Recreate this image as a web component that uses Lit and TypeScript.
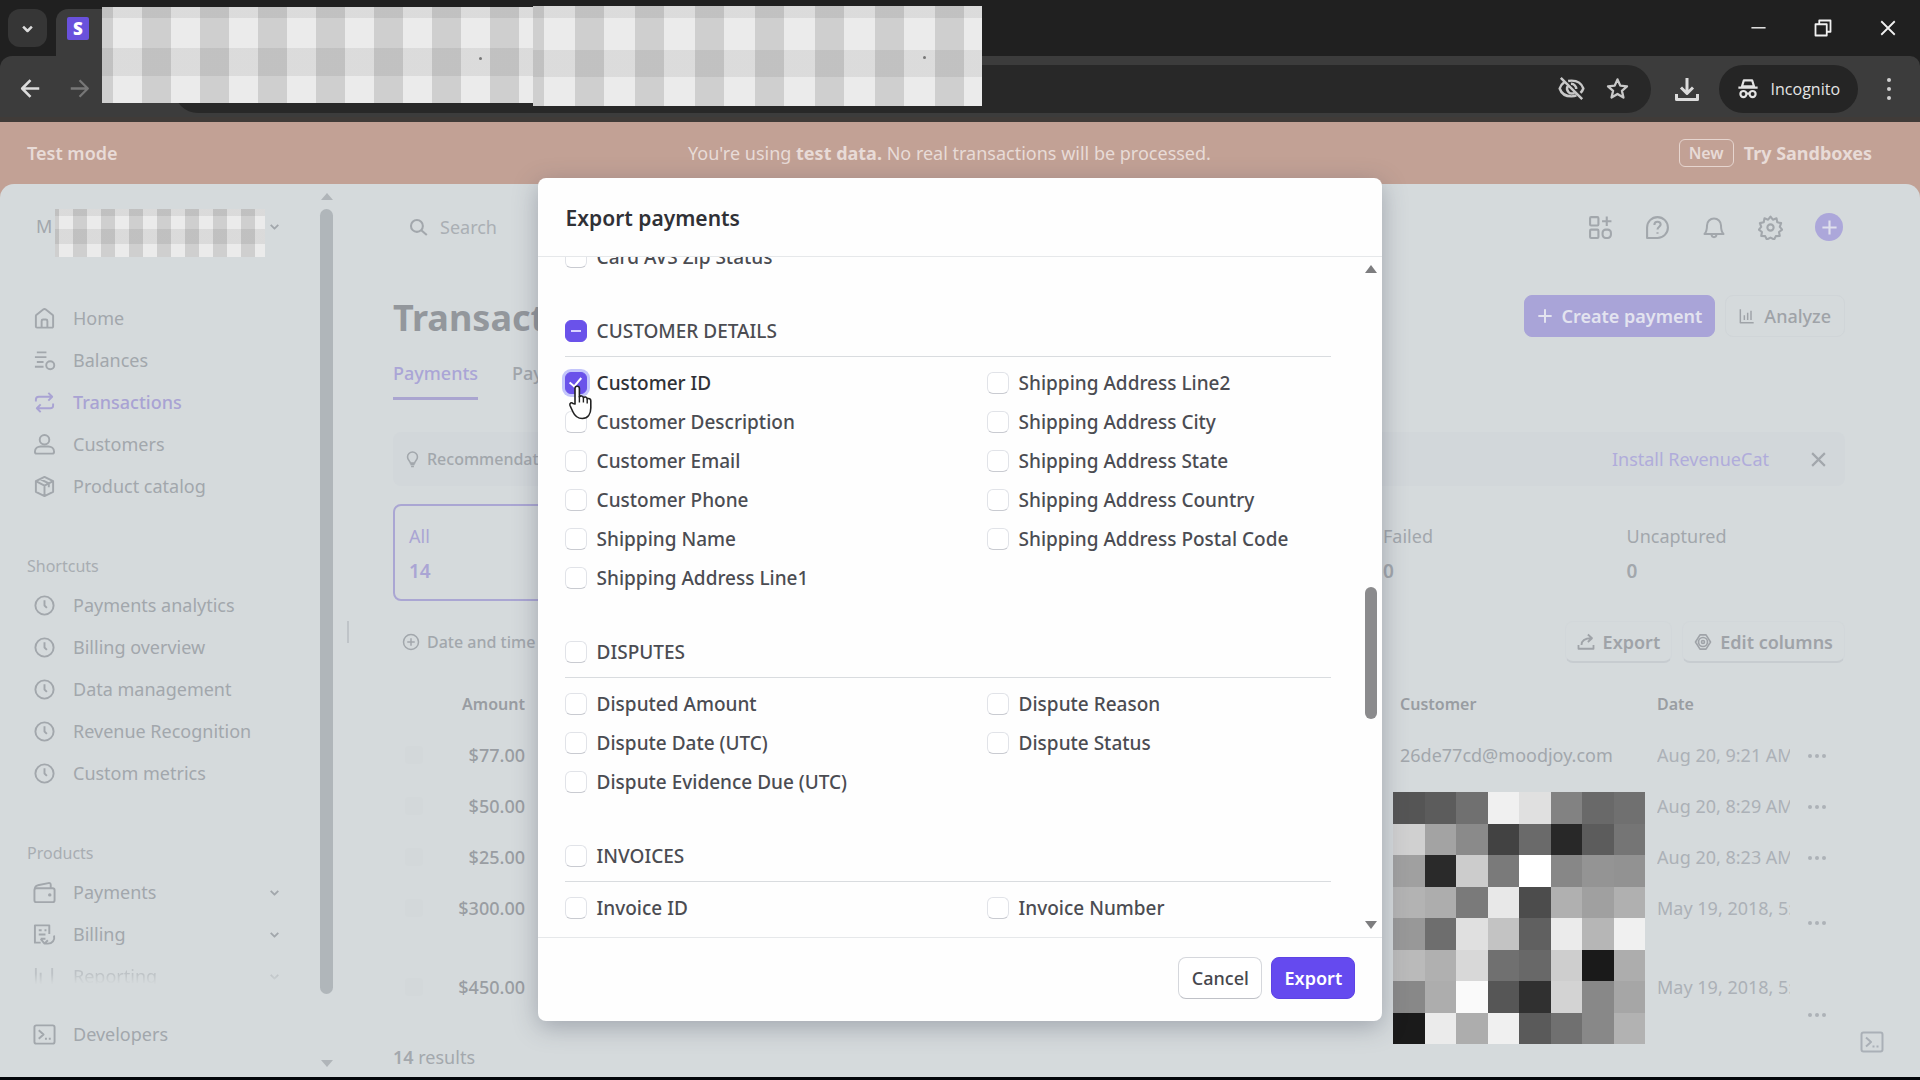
import { LitElement, html, svg, css, nothing } from "lit";
import { customElement, state } from "lit/decorators.js";
import { classMap } from "lit/directives/class-map.js";
import { styleMap } from "lit/directives/style-map.js";

const paths: Record<string, unknown> = {
  home: svg`<path d="M3 9.5v10.8a1.2 1.2 0 0 0 1.2 1.2h15.6a1.2 1.2 0 0 0 1.2-1.2V9.5c0-.6-.3-1.200-.8-1.500L13.400 2.600a2.300 2.300 0 0 0-2.800 0L3.800 8c-.5.300-.8.900-.8 1.500z"/><path d="M9 21v-6.500a1.500 1.500 0 0 1 1.500-1.500h3a1.500 1.500 0 0 1 1.500 1.500V21"/>`,
  balances: svg`<path d="M4 3.500h10M2 8.500h12M4 13.500h7M2 18.500h9"/><circle cx="18" cy="17" r="4.200"/>`,
  swap: svg`<path d="M3 11V9a3 3 0 0 1 3-3h14M16 2l4 4-4 4M21 13v2a3 3 0 0 1-3 3H4M8 14l-4 4 4 4"/>`,
  person: svg`<circle cx="12" cy="7" r="5"/><path d="M2 19.500c0-3.500 3-5.500 6-5.500h8c3 0 6 2 6 5.500 0 1-.8 2-2 2H4c-1.200 0-2-1-2-2z"/>`,
  box: svg`<path d="M12 2l9 4.500v11L12 22l-9-4.500v-11zM3 6.500l9 4.500 9-4.500M12 11v11M7.500 4.300l9 4.500v4"/>`,
  clock: svg`<circle cx="12" cy="12" r="9.500"/><path d="M12 6.500V12l2.500 2.500"/>`,
  wallet: svg`<rect x="1.500" y="7.500" width="21" height="14.500" rx="2"/><path d="M2 8c0-2 1-3 3-3.500L16 2.200c1.500-.3 2.500.3 2.500 2V7.500"/><circle cx="17.500" cy="14.500" r=".8" fill="currentColor"/>`,
  billing: svg`<path d="M8 20.500H2V2.500h15v9M6 7.500h3M6 12h7M12 7.500h2"/><path d="M8 16.500h5M8 16.500l4 5M22 13c1 5-2 8.500-6.500 8.500H12l3.500-3.500"/>`,
  report: svg`<path d="M3 20V3M20 20V3M8 20V8"/>`,
  terminal: svg`<rect x="1.500" y="2.500" width="21" height="19" rx="2"/><path d="M6 7.500l5 4.500-5 4.500M12.500 16.500h2M16.500 16.500h2"/>`,
  search: svg`<circle cx="10" cy="10" r="7.500"/><path d="M15.500 15.500l7 6"/>`,
  chev: svg`<path d="M5 9l7 7 7-7"/>`,
  apps: svg`<rect x="2" y="2" width="8" height="8" rx="1"/><rect x="2" y="14" width="8" height="8" rx="1"/><rect x="14" y="14" width="8" height="8" rx="3"/><path d="M18 1.500v9M13.500 6h9"/>`,
  help: svg`<path d="M2 22v-10a10 10 0 1 1 10 10z"/><path d="M9 9.500c0-4 6-4 6-.3 0 2-3 2.300-3 4.800M12 16.500v1.500"/>`,
  bell: svg`<path d="M2.500 19c2-2 2.500-4 2.500-8.500a7 7 0 0 1 14 0c0 4.500.5 6.500 2.500 8.500zM9.500 19.500c.3 3.500 4.700 3.500 5 0"/>`,
  gear: svg`<circle cx="12" cy="12" r="3"/><path d="M12 1.500l2.300 3 3.500-1.300.7 3.800 3.700.8-1.300 3.600 2.300 2.600-3 2.300.7 3.800-3.800.2-1.600 3.200-3.500-1.800-3.500 1.800-1.600-3.200-3.800-.2.700-3.800-3-2.300 2.300-2.600L1.800 7.800l3.700-.8.700-3.800 3.500 1.300z"/>`,
  hexgear: svg`<path d="M8 2.500h8l6 9.500-6 9.500H8L2 12z"/><circle cx="12" cy="12" r="6"/><circle cx="12" cy="12" r="2"/>`,
  plus: svg`<path d="M12 2v20M2 12h20"/>`,
  chart: svg`<path d="M2 2v20h20M8 18v-7M13 18V7M18 18V4"/>`,
  bulb: svg`<path d="M9 19h6M10 22h4M9 17c-.5-3-4-4-4-8.500a7 7 0 0 1 14 0c0 4.500-3.500 5.500-4 8.500z"/>`,
  addcircle: svg`<circle cx="12" cy="12" r="10"/><path d="M12 7v10M7 12h10"/>`,
  share: svg`<path d="M2 16v5h20v-5M6 16c0-6 4-9 13-9M14.500 2L20 7l-5.500 5"/>`,
  close: svg`<path d="M3 3l18 18M21 3L3 21"/>`,
  back: svg`<path d="M22 12H3M12 2.500L2.500 12l9.500 9.500"/>`,
  forward: svg`<path d="M2 12h19M12 2.500l9.500 9.500-9.500 9.500"/>`,
  min: svg`<path d="M2 11h20"/>`,
  restore: svg`<rect x="2" y="7" width="15" height="15"/><path d="M7 7V2h15v15h-5"/>`,
  eyeoff: svg`<path d="M5.500 6.500C3.500 8 2 10 1.500 12 3 16.500 7 19 12 19c1.500 0 3-.2 4.300-.8M9 5.300c1-.2 2-.3 3-.3 5 0 9 2.500 10.500 7-.5 1.500-1.400 2.800-2.500 3.900M8.500 10a4.500 4.500 0 0 0 6 6M11.500 7.800a4.500 4.500 0 0 1 4.700 4.700M2.500 2.500l19 19"/>`,
  star: svg`<path d="M12 2.500l2.900 6.500 7 .7-5.300 4.700 1.600 7L12 17.700l-6.200 3.700 1.600-7L2.100 9.700l7-.7z"/>`,
  download: svg`<path d="M12 1v15M6 10.500l6 6 6-6M1.500 17v5.500h21V17"/>`,
  incognito: svg`<path d="M7.500 2.500h9l2 6.500h-13zM1.500 10.500h21" /><circle cx="7" cy="17.500" r="3.300"/><circle cx="17" cy="17.500" r="3.300"/><path d="M10.300 17h3.400"/>`,
};

const icon = (name: string, size = 22, stroke = 2) => html`<svg
  class="icon" width=${size} height=${size} viewBox="0 0 24 24" fill="none"
  stroke="currentColor" stroke-width=${stroke} stroke-linejoin="round" aria-hidden="true"
>${paths[name]}</svg>`;

interface Section { title?: string; left: string[]; right: string[]; }

const sections: Section[] = [
  { left: ["Card AVS Zip Status"], right: [] },
  {
    title: "CUSTOMER DETAILS",
    left: ["Customer ID", "Customer Description", "Customer Email", "Customer Phone", "Shipping Name", "Shipping Address Line1"],
    right: ["Shipping Address Line2", "Shipping Address City", "Shipping Address State", "Shipping Address Country", "Shipping Address Postal Code"],
  },
  {
    title: "DISPUTES",
    left: ["Disputed Amount", "Dispute Date (UTC)", "Dispute Evidence Due (UTC)"],
    right: ["Dispute Reason", "Dispute Status"],
  },
  { title: "INVOICES", left: ["Invoice ID"], right: ["Invoice Number"] },
];

const mosaic = [
  "55 5c 70 f0 e0 82 69 70", "d0 a3 8a 42 6a 28 5c 75", "a0 2a cc 7a ff 87 94 92", "b3 ad 7a e8 4c b0 a0 b0",
  "98 6e e0 c3 60 eb b6 f0", "ba b0 d8 70 68 ce 1a ad", "88 ad fa 56 30 d3 88 a6", "1a eb ad f0 5a 70 88 b2",
].flatMap((row) => row.split(" "));

@customElement("export-dialog")
class ExportDialog extends LitElement {
  @state() private chosen = new Set<string>(["Customer ID"]);

  static styles = css`
    :host {
      display: flex; flex-direction: column; width: 44%; height: calc(100% - 112px);
      background: #fefefe; border-radius: 8px; color: #4b4c52;
      box-shadow: 0 6px 24px rgba(60, 66, 87, 0.35);
      font: 500 19px/24px "Noto Sans", "Open Sans", sans-serif;
    }
    header { box-sizing: border-box; height: 79px; padding: 2px 28px 0; display: flex; align-items: center; border-bottom: 1px solid #e6e8ea; }
    h2 { margin: 0; font-size: 21px; font-weight: 600; color: #303136; }
    .body { flex: 1; min-height: 0; display: flex; }
    .content { flex: 1; overflow: hidden; padding: 0 29px 0 27px; }
    .sections { margin-top: -20px; }
    .section { margin-bottom: 30px; }
    .head { height: 50px; display: flex; align-items: center; border-bottom: 1px solid #d9dcdf; margin-bottom: 6px; }
    .cols { display: grid; grid-template-columns: 422px 1fr; }
    .row { height: 39px; display: flex; align-items: center; }
    label { padding-left: 10px; white-space: nowrap; }
    .on + label { color: #303136; }
    input {
      appearance: none; box-sizing: border-box; width: 22px; height: 22px; margin: 0; flex: none;
      border: 1px solid #e1e3e8; border-bottom-color: #c9cbd1; border-radius: 6px; background: #fff;
      display: grid; place-items: center;
    }
    input.on, input.some { background: #6a52ea; border-color: #6a52ea; }
    input.on { box-shadow: 0 0 0 3px #c3c5fb; }
    input.some::after { content: ""; width: 10px; height: 2px; background: #d9d3ff; }
    input.on::after { content: ""; width: 5px; height: 10px; margin-bottom: 4px; border: solid #fff; border-width: 0 2px 2px 0; transform: rotate(40deg); }
    .bar { width: 22px; display: flex; flex-direction: column; align-items: center; padding: 8px 0; box-sizing: border-box; }
    .up, .down { border: 6px solid transparent; }
    .up { border-top: 0; border-bottom: 8px solid #7d7d7f; }
    .down { border-bottom: 0; border-top: 8px solid #7d7d7f; }
    .track { flex: 1; align-self: stretch; display: grid; grid-template-rows: 314fr 132fr 202fr; justify-items: center; }
    .thumb { grid-row: 2; width: 12px; border-radius: 6px; background: #8b8b8d; }
    footer { box-sizing: border-box; height: 84px; border-top: 1px solid #e6e8ea; padding: 0 27px 3px; display: flex; align-items: center; justify-content: flex-end; gap: 9px; }
    button {
      box-sizing: border-box; height: 42px; width: 84px; padding: 0; border-radius: 8px; border: 1px solid #d5d7dc;
      border-bottom-color: #bfc1c7; background: #fff; color: #46474d; font: inherit; font-size: 18px;
    }
    button.primary { background: #654aef; border-color: #5d43e4; color: #fff; font-weight: 600; }
  `;

  private toggle(name: string) {
    const next = new Set(this.chosen);
    next.has(name) ? next.delete(name) : next.add(name);
    this.chosen = next;
  }

  private field(name: string) {
    const id = name.toLowerCase().replace(/\W+/g, "-");
    const on = this.chosen.has(name);
    return html`<div class="row"><input type="checkbox" id=${id} class=${classMap({ on })} .checked=${on} @change=${() => this.toggle(name)}><label for=${id}>${name}</label></div>`;
  }

  private section(s: Section) {
    const some = [...s.left, ...s.right].some((n) => this.chosen.has(n));
    return html`<section class="section">
      ${s.title ? html`<div class="head"><input type="checkbox" id=${s.title.replace(" ", "-")} class=${classMap({ some })} .indeterminate=${some}><label for=${s.title.replace(" ", "-")}>${s.title}</label></div>` : nothing}
      <div class="cols"><div>${s.left.map((n) => this.field(n))}</div><div>${s.right.map((n) => this.field(n))}</div></div>
    </section>`;
  }

  render() {
    return html`
      <header><h2>Export payments</h2></header>
      <div class="body">
        <div class="content"><div class="sections">${sections.map((s) => this.section(s))}</div></div>
        <div class="bar"><i class="up"></i><div class="track"><i class="thumb"></i></div><i class="down"></i></div>
      </div>
      <footer><button>Cancel</button><button class="primary">Export</button></footer>`;
  }
}

@customElement("browser-chrome")
class BrowserChrome extends LitElement {
  static styles = css`
    :host { display: block; position: relative; height: 122px; background: #202020; color: #dcdcdc; font: 400 16px/24px "Open Sans", "Noto Sans", sans-serif; }
    button { background: none; border: 0; padding: 0; color: inherit; font: inherit; display: flex; align-items: center; justify-content: center; }
    .icon { display: block; }
    .tabs { height: 56px; display: flex; align-items: center; padding: 0 21px 0 8px; }
    .search { width: 39px; height: 38px; border-radius: 12px; background: #363636; }
    .tab { align-self: flex-end; margin-left: 9px; height: 47px; width: 60px; border-radius: 12px 12px 0 0; background: #3c3c3c; display: flex; align-items: center; padding-left: 11px; }
    .fav { width: 22px; height: 23px; border-radius: 2px; background: #6951dc; color: #fff; font-weight: 800; font-size: 17px; line-height: 23px; text-align: center; margin-bottom: 9px; }
    .win { margin-left: auto; display: flex; gap: 47px; padding-right: 2px; color: #f0f0f0; }
    .bar { height: 66px; background: #3c3c3c; display: flex; align-items: center; padding: 4px 20px 0 20px; border-radius: 12px 10px 0 0; box-sizing: border-box; border-bottom: 5px solid #403b38; }
    .fwd { color: #777; margin-left: 28px; }
    .url { flex: 1; height: 48px; margin-left: 84px; border-radius: 24px; background: #282828; display: flex; align-items: center; justify-content: flex-end; gap: 21px; padding-right: 22px; color: #c8c8c8; }
    .dl { margin: 0 20px 0 24px; }
    .incog { height: 48px; padding: 0 18px; border-radius: 24px; background: #252525; display: flex; align-items: center; gap: 12px; margin-right: 20px; color: #e4e4e4; }
    .more { display: grid; gap: 5px; width: 22px; justify-items: center; }
    .more i { width: 4px; height: 4px; border-radius: 2px; background: #d0d0d0; }
    .mask { position: absolute; }
    .m1 { left: 102px; top: 7px; width: 432px; height: 96px;
      background: linear-gradient(rgba(0,0,0,.065) 11px, transparent 11px 41px, rgba(0,0,0,.065) 41px 69px, transparent 69px),
        repeating-linear-gradient(90deg, #cfcfcf 0 29px, #ebebeb 29px 58px) -18px 0 / 464px 100%; }
    .m2 { left: 533px; top: 6px; width: 449px; height: 100px;
      background: linear-gradient(rgba(0,0,0,.065) 12px, transparent 12px 44px, rgba(0,0,0,.065) 44px 71px, transparent 71px),
        repeating-linear-gradient(90deg, #cfcfcf 0 29px, #ebebeb 29px 60px) -18px 0 / 480px 100%; }
    .speck { position: absolute; right: 52px; top: 50px; width: 3px; height: 3px; border-radius: 2px; background: #777; }
    .m2 .speck { right: 56px; }
  `;
  render() {
    return html`
      <div class="tabs">
        <button class="search" aria-label="Search tabs">${icon("chev", 15, 4)}</button>
        <div class="tab"><div class="fav">S</div></div>
        <div class="win">
          <button aria-label="Minimize">${icon("min", 17, 2)}</button>
          <button aria-label="Restore">${icon("restore", 18, 2.4)}</button>
          <button aria-label="Close">${icon("close", 18, 2.4)}</button>
        </div>
      </div>
      <div class="bar">
        <button aria-label="Back">${icon("back", 21, 3)}</button>
        <button class="fwd" aria-label="Forward">${icon("forward", 21, 2.6)}</button>
        <div class="url">${icon("eyeoff", 27, 2.2)}${icon("star", 23, 2.4)}</div>
        <button class="dl" aria-label="Downloads">${icon("download", 24, 3)}</button>
        <div class="incog">${icon("incognito", 22, 2.4)}<span>Incognito</span></div>
        <button class="more" aria-label="Menu"><i></i><i></i><i></i></button>
      </div>
      <div class="mask m1"><i class="speck"></i></div>
      <div class="mask m2"><i class="speck"></i></div>`;
  }
}

@customElement("app-root")
class AppRoot extends LitElement {
  static styles = css`
    :host { display: flex; flex-direction: column; height: 100vh; overflow: hidden; background: #c2a195; font: 400 18px/24px "Noto Sans", "Open Sans", sans-serif; color: #a2a7ac; }
    a { color: inherit; text-decoration: none; }
    button { font: inherit; color: inherit; background: none; border: 0; padding: 0; display: flex; align-items: center; justify-content: center; }
    .icon { display: block; flex: none; }
    .banner { height: 62px; padding: 0 48px 0 27px; display: grid; grid-template-columns: 1fr auto 1fr; align-items: center; color: #e8dbd7; }
    .banner b { font-weight: 600; }
    .banner span { text-align: center; }
    .banner strong { font-weight: 700; }
    .try { display: flex; justify-content: flex-end; align-items: center; gap: 10px; font-weight: 700; }
    .new { border: 1px solid #e6d5cf; border-radius: 6px; padding: 0 9px; height: 26px; font-size: 16px; line-height: 26px; font-weight: 600; }
    .page { flex: 1; min-height: 0; display: flex; background: #d5dadc; border-radius: 14px 14px 0 0; border-bottom: 3px solid #03060a; }

    .side { width: 320px; box-sizing: border-box; padding: 21px 0 0 27px; display: flex; flex-direction: column; position: relative; }
    .acct { height: 42px; padding: 0 39px 0 9px; display: flex; align-items: center; justify-content: space-between; position: relative; }
    .amask { position: absolute; left: 28px; top: 4px; width: 210px; height: 48px;
      background: linear-gradient(rgba(0,0,0,.07) 7px, transparent 7px 20px, rgba(0,0,0,.07) 20px 35px, transparent 35px),
        repeating-linear-gradient(90deg, #ebebeb 0 14px, #cfcfcf 14px 28px) 4px 0 / 224px 100%; }
    .nav { list-style: none; margin: 0; padding: 0; }
    .nav a { display: flex; align-items: center; height: 42px; padding: 0 39px 0 6px; gap: 17px; }
    .nav .chev { margin-left: auto; }
    .first { margin-top: 50px; }
    .active { color: #a9a3d3; font-weight: 500; }
    .cap { font-size: 16px; margin: 47px 0 6px; height: 24px; color: #a8adb2; font-weight: 400; }
    .fade { opacity: 0.45; -webkit-mask-image: linear-gradient(#000 45%, transparent 70%); mask-image: linear-gradient(#000 45%, transparent 70%); }
    .dev { margin-top: 16px; }
    .sbar { width: 13px; padding: 9px 0 10px; display: flex; flex-direction: column; align-items: center; box-sizing: border-box; }
    .up, .down { border: 6px solid transparent; }
    .up { border-top: 0; border-bottom: 7px solid #b0b5b9; }
    .down { border-bottom: 0; border-top: 7px solid #b0b5b9; }
    .sthumb { flex: 1; width: 13px; border-radius: 7px; background: #b0b6ba; margin: 9px 0 66px; }
    .grip { width: 2px; height: 22px; margin: 437px 0 0 14px; background: #bfc4c8; }

    .main { flex: 1; min-width: 0; padding: 0 75px 0 44px; display: flex; flex-direction: column; }
    .main > * { flex: none; }
    .top { height: 86px; display: flex; align-items: center; padding-left: 16px; }
    .search { display: flex; align-items: center; gap: 12px; }
    .search input { border: 0; background: none; font: inherit; width: 300px; padding: 0; outline: 0; }
    .search input::placeholder { color: #aaafb4; opacity: 1; }
    .tools { margin-left: auto; display: flex; align-items: center; gap: 32px; padding-right: 2px; }
    .add { width: 28px; height: 28px; border-radius: 14px; background: #aca7da; color: #dfe0ec; }
    .title { margin-top: 25px; height: 42px; display: flex; align-items: center; gap: 10px; }
    h1 { margin: 0 auto 0 0; font-size: 36px; line-height: 42px; padding-top: 3px; font-weight: 700; color: #93979c; }
    .title button { height: 42px; border-radius: 8px; gap: 9px; font-weight: 500; padding: 0 13px; box-sizing: border-box; border: 1px solid #d0d5d8; color: #9fa3a8; }
    .title .create { background: #a9a4d8; color: #e3e3ef; border-color: #a9a4d8; font-weight: 600; padding: 0 12px; }
    .tabs { display: flex; gap: 34px; margin-top: 18px; font-weight: 500; }
    .tabs a { line-height: 36px; padding-bottom: 6px; border-bottom: 3px solid transparent; }
    .tabs .cur { color: #aaa5d6; border-color: #aaa5d0; }
    .rec { margin-top: 32px; height: 54px; background: #d2d7da; border-radius: 8px; display: flex; align-items: center; gap: 6px; padding: 0 18px 0 11px; font-size: 16px; font-weight: 500; }
    .rec a { margin-left: auto; font-size: 18px; font-weight: 400; color: #b0acdb; margin-right: 35px; }
    .stats { margin-top: 18px; display: grid; grid-template-columns: repeat(6, 1fr); gap: 9px; }
    .stat { box-sizing: border-box; height: 97px; border: 2px solid transparent; border-radius: 8px; padding: 14px 14px 0; line-height: 32px; }
    .stat p { margin: 0 0 3px; }
    .stat b { display: block; font-weight: 600; font-size: 19px; }
    .stat.all { border-color: #aaa6d3; color: #aaa5d4; }
    .fail { grid-column: 5; }
    .tool { margin-top: 20px; display: flex; align-items: center; gap: 10px; height: 42px; }
    .tool .chip { margin-right: auto; font-size: 16px; font-weight: 500; padding-left: 9px; gap: 7px; }
    .btn { height: 42px; box-sizing: border-box; padding: 0 11px; gap: 8px; border: 1px solid #d2d7da; border-bottom: 2px solid #c7ccd0; border-radius: 8px; font-weight: 600; color: #9fa3a8; }
    table { margin-top: 16px; border-collapse: collapse; table-layout: fixed; width: 100%; }
    th, td { padding: 0; text-align: left; font-weight: 400; vertical-align: top; overflow: hidden; white-space: nowrap; }
    th { height: 51px; line-height: 51px; font-size: 16px; font-weight: 600; color: #999da2; }
    td { height: 51px; line-height: 51px; }
    .tall td { height: 79px; }
    .c1 { width: 47px; } .c2 { width: 85px; } .c4 { width: 257px; } .c5 { width: 133px; } .c6 { width: 55px; }
    .amt { text-align: right; }
    td.amt { font-weight: 500; color: #999da2; }
    .date { color: #acb1b7; }
    td.menu { vertical-align: middle; padding-left: 18px; }
    .dots { gap: 3px; height: 22px; }
    .dots i { width: 4px; height: 4px; border-radius: 2px; background: #adb2b7; }
    .last td.menu { vertical-align: bottom; height: 64px; padding-bottom: 15px; }
    .pick { appearance: none; width: 18px; height: 18px; margin: 16px 12px; border-radius: 4px; background: #d3d8da; display: block; }
    .results { margin: auto 0 6px; height: 28px; line-height: 28px; color: #a3a8ad; }
    .results b { font-weight: 600; }

    .redact { position: absolute; left: 1393px; top: 792px; width: 252px; height: 252px; display: grid; grid-template: repeat(8, 1fr) / repeat(8, 1fr); }
    .console { position: absolute; right: 36px; bottom: 26px; color: #aab0b7; }
    .overlay { position: absolute; inset: 122px 0 3px; display: flex; align-items: center; justify-content: center; }
    .cursor { position: absolute; left: 566px; top: 384px; }
  `;

  private link(name: string, label: string, opts: { chev?: boolean; cls?: string } = {}) {
    return html`<li><a href="#" class=${opts.cls ?? ""}>${icon(name, 23, 2)}<span>${label}</span>${opts.chev ? html`<span class="chev">${icon("chev", 13, 3.4)}</span>` : nothing}</a></li>`;
  }

  private row(amount: string, customer: string, date: string, cls = "") {
    return html`<tr class=${cls}>
      <td><input class="pick" type="checkbox" aria-label="Select ${amount}"></td>
      <td class="amt">${amount}</td><td></td><td>${customer}</td><td class="date">${date}</td>
      <td class="menu"><button class="dots" aria-label="More"><i></i><i></i><i></i></button></td>
    </tr>`;
  }

  render() {
    return html`
      <browser-chrome></browser-chrome>
      <div class="banner">
        <b>Test mode</b>
        <span>You're using <strong>test data.</strong> No real transactions will be processed.</span>
        <a class="try" href="#"><span class="new">New</span>Try Sandboxes</a>
      </div>
      <div class="page">
        <nav class="side">
          <div class="acct"><span>M</span>${icon("chev", 13, 3.4)}<div class="amask"></div></div>
          <ul class="nav first">
            ${this.link("home", "Home")}${this.link("balances", "Balances")}
            ${this.link("swap", "Transactions", { cls: "active" })}
            ${this.link("person", "Customers")}${this.link("box", "Product catalog")}
          </ul>
          <h3 class="cap">Shortcuts</h3>
          <ul class="nav">
            ${["Payments analytics", "Billing overview", "Data management", "Revenue Recognition", "Custom metrics"].map((n) => this.link("clock", n))}
          </ul>
          <h3 class="cap">Products</h3>
          <ul class="nav">
            ${this.link("wallet", "Payments", { chev: true })}${this.link("billing", "Billing", { chev: true })}
            ${this.link("report", "Reporting", { chev: true, cls: "fade" })}
          </ul>
          <ul class="nav dev">${this.link("terminal", "Developers")}</ul>
        </nav>
        <div class="sbar"><i class="up"></i><div class="sthumb"></div><i class="down"></i></div>
        <div class="grip"></div>
        <main class="main">
          <div class="top">
            <label class="search">${icon("search", 19, 2.6)}<input type="search" placeholder="Search" aria-label="Search"></label>
            <div class="tools">
              <button aria-label="Apps">${icon("apps", 25, 2)}</button><button aria-label="Help">${icon("help", 25, 2)}</button>
              <button aria-label="Notifications">${icon("bell", 24, 2)}</button><button aria-label="Settings">${icon("gear", 25, 2)}</button>
              <button class="add" aria-label="Add">${icon("plus", 17, 3)}</button>
            </div>
          </div>
          <div class="title">
            <h1>Transactions</h1>
            <button class="create">${icon("plus", 16, 3)}Create payment</button>
            <button>${icon("chart", 16, 2.2)}Analyze</button>
          </div>
          <div class="tabs"><a class="cur" href="#">Payments</a><a href="#">Payouts</a></div>
          <div class="rec">${icon("bulb", 17, 2.2)}<span>Recommendations</span><a href="#">Install RevenueCat</a><button aria-label="Dismiss">${icon("close", 17, 3)}</button></div>
          <div class="stats">
            <div class="stat all"><p>All</p><b>14</b></div>
            <div class="stat fail"><p>Failed</p><b>0</b></div>
            <div class="stat"><p>Uncaptured</p><b>0</b></div>
          </div>
          <div class="tool">
            <button class="chip">${icon("addcircle", 18, 2)}Date and time</button>
            <button class="btn">${icon("share", 18, 2.4)}Export</button>
            <button class="btn">${icon("hexgear", 18, 2.2)}Edit columns</button>
          </div>
          <table>
            <thead><tr><th class="c1"></th><th class="c2 amt">Amount</th><th></th><th class="c4">Customer</th><th class="c5">Date</th><th class="c6"></th></tr></thead>
            <tbody>
              ${this.row("$77.00", "26de77cd@moodjoy.com", "Aug 20, 9:21 AM")}
              ${this.row("$50.00", "", "Aug 20, 8:29 AM")}
              ${this.row("$25.00", "", "Aug 20, 8:23 AM")}
              ${this.row("$300.00", "", "May 19, 2018, 5:10 PM", "tall")}
              ${this.row("$450.00", "", "May 19, 2018, 5:10 PM", "tall last")}
            </tbody>
          </table>
          <p class="results"><b>14</b> results</p>
        </main>
      </div>
      <div class="redact">${mosaic.map((v) => html`<i style=${styleMap({ background: `#${v}${v}${v}` })}></i>`)}</div>
      <button class="console" aria-label="Open console">${icon("terminal", 24, 2)}</button>
      <div class="overlay"><export-dialog></export-dialog></div>
      <svg class="cursor" width="28" height="36" viewBox="0 0 28 36" aria-hidden="true">
        <path fill="#fff" stroke="#222" stroke-width="1.600" stroke-linejoin="round" d="M9 20V4.500a2.200 2.200 0 0 1 4.400 0V13c.6-1.600 3.600-1.400 4 .6 1.200-1.200 3.600-.6 3.800 1.200 1.600-.8 3.600 0 3.600 2V24c0 6-3 10.500-8.500 10.500-5 0-7.500-2.500-9.300-6.500L4 21.500c-.8-2.400 1.600-3.600 3-2z"/>
        <path fill="none" stroke="#222" stroke-width="1.400" d="M13.400 12v6.500M17.400 13.500v5M21.200 15v4.500"/>
      </svg>`;
  }
}
